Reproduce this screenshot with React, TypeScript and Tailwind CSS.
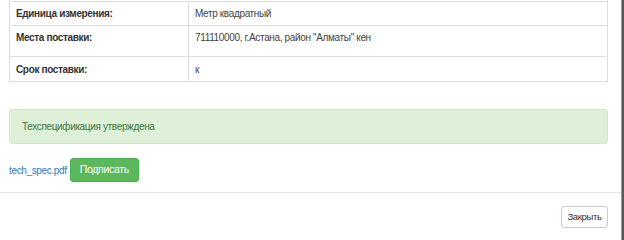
import React from 'react';

const rows = [
  { label: 'Единица измерения:', value: 'Метр квадратный', h: 'h-[24px]', pt: 'pt-[5px]' },
  { label: 'Места поставки:', value: '711110000, г.Астана, район "Алматы" кен', h: 'h-[31px]', pt: 'pt-[5px]' },
  { label: 'Срок поставки:', value: 'к', h: 'h-[25px]', pt: 'pt-[6px]' },
];

export default function App() {
  return (
    <div className="w-[624px] h-[240px] flex bg-white overflow-hidden font-['Liberation_Sans',Arial,sans-serif] text-[10px] tracking-[-0.35px] text-[#333]">
      <div className="w-[621px] flex flex-col">
        {/* Table */}
        <div className="px-[9px] pr-[13px]">
          <div className="h-[1px] border-x border-[#ddd]" />
          <div className="border border-[#ddd] border-t-0">
            {rows.map((r) => (
              <div key={r.label} className={`flex border-t border-[#ddd] ${r.h}`}>
                <div className={`w-[179px] shrink-0 border-r border-[#ddd] pl-[6px] font-bold leading-[13px] ${r.pt}`}>
                  {r.label}
                </div>
                <div className={`flex-1 pl-[6px] leading-[13px] text-[#444] ${r.pt}`}>{r.value}</div>
              </div>
            ))}
          </div>
        </div>

        {/* Alert */}
        <div className="px-[9px] pr-[13px] mt-[27px]">
          <div className="h-[35px] rounded-[3px] bg-[#dff0d8] border border-[#d6e9c6] text-[#3c763d] pl-[12px] flex items-center">
            Техспецификация утверждена
          </div>
        </div>

        {/* File + sign */}
        <div className="flex items-center pl-[9px] mt-[14px] h-[24px]">
          <span className="text-[#337ab7] mr-[3px]">tech_spec.pdf</span>
          <button className="h-[24px] px-[9px] rounded-[3px] bg-[#5cb85c] border border-[#4cae4c] text-white text-[10.5px] tracking-[-0.3px]">
            Подписать
          </button>
        </div>

        {/* Footer */}
        <div className="mt-[10px] border-t border-[#e5e5e5] flex justify-end pr-[13px] pt-[13px]">
          <button className="h-[22px] w-[47px] rounded-[3px] bg-white border border-[#ccc] text-[#333] text-[9.5px]">
            Закрыть
          </button>
        </div>
      </div>
      <div className="w-[3px] bg-[#5a5a5a] border-l border-[#999]" />
    </div>
  );
}
